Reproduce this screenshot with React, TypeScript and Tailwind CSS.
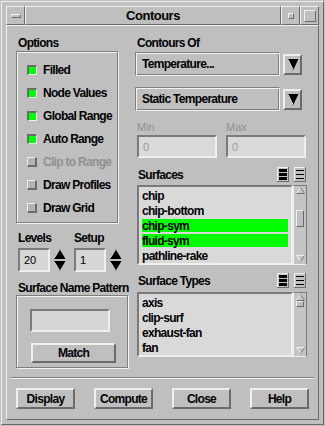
const raised1 = "border border-t-[#efefef] border-l-[#efefef] border-r-[#6b6b6b] border-b-[#6b6b6b]";
const raised2 = "border-2 border-t-[#efefef] border-l-[#efefef] border-r-[#6b6b6b] border-b-[#6b6b6b]";
const sunken2 = "border-2 border-t-[#7a7a7a] border-l-[#7a7a7a] border-r-[#efefef] border-b-[#efefef]";
const etched = "border border-[#7f7f7f] shadow-[inset_1px_1px_0_#f2f2f2,1px_1px_0_#f2f2f2]";
const etchedIn = "border border-t-[#7f7f7f] border-l-[#7f7f7f] border-r-[#f2f2f2] border-b-[#f2f2f2] shadow-[inset_1px_1px_0_#f2f2f2,inset_-1px_-1px_0_#7f7f7f]";

const options = [
  { label: "Filled", on: true },
  { label: "Node Values", on: true },
  { label: "Global Range", on: true },
  { label: "Auto Range", on: true },
  { label: "Clip to Range", on: false, disabled: true },
  { label: "Draw Profiles", on: false },
  { label: "Draw Grid", on: false },
];

const surfaces = [
  { name: "chip" },
  { name: "chip-bottom" },
  { name: "chip-sym", sel: true },
  { name: "fluid-sym", sel: true },
  { name: "pathline-rake" },
];

const surfaceTypes = ["axis", "clip-surf", "exhaust-fan", "fan"];

const DownArrow = () => (
  <svg width="12" height="13" viewBox="0 0 12 13">
    <polygon points="0.5,1 11.5,1 6,12.5" fill="#000" />
    <line x1="1" y1="1.5" x2="6" y2="11.5" stroke="#f0f0f0" strokeWidth="1" />
  </svg>
);

const SpinArrows = () => (
  <svg width="13" height="24" viewBox="0 0 13 24">
    <polygon points="6.5,1 12.5,11 0.5,11" fill="#000" />
    <line x1="6.5" y1="1.5" x2="1" y2="10.5" stroke="#f0f0f0" />
    <polygon points="0.5,13 12.5,13 6.5,23" fill="#000" />
    <line x1="1" y1="13.5" x2="6.5" y2="22.5" stroke="#f0f0f0" />
  </svg>
);

const ListIcons = () => (
  <div className="flex gap-[5px] pr-px">
    <svg width="12" height="15" viewBox="0 0 12 15">
      <rect x="0" y="0" width="12" height="15" fill="#bfbfbf" />
      <path d="M0 0H12M0 0V15" stroke="#f0f0f0" strokeWidth="2" />
      <path d="M12 0V15M0 15H12" stroke="#6b6b6b" strokeWidth="2" />
      <rect x="2" y="2" width="8" height="3" fill="#000" />
      <rect x="2" y="6" width="8" height="3" fill="#000" />
      <rect x="2" y="10" width="8" height="3" fill="#000" />
    </svg>
    <svg width="12" height="15" viewBox="0 0 12 15">
      <rect x="0" y="0" width="12" height="15" fill="#bfbfbf" />
      <path d="M0 0H12M0 0V15" stroke="#f0f0f0" strokeWidth="2" />
      <path d="M12 0V15M0 15H12" stroke="#6b6b6b" strokeWidth="2" />
      <path d="M2 3.5H10M2 7.5H10M2 11.5H10" stroke="#000" strokeWidth="1" />
    </svg>
  </div>
);

const ScrollUp = () => (
  <svg width="9" height="7" viewBox="0 0 9 7">
    <polygon points="4.5,0.5 8.5,6.5 0.5,6.5" fill="#c8c8c8" stroke="#f0f0f0" />
    <line x1="0.5" y1="6.5" x2="8.5" y2="6.5" stroke="#6b6b6b" />
    <line x1="4.5" y1="0.5" x2="8.5" y2="6.5" stroke="#6b6b6b" />
  </svg>
);

const ScrollDown = () => (
  <svg width="9" height="7" viewBox="0 0 9 7">
    <polygon points="0.5,0.5 8.5,0.5 4.5,6.5" fill="#c8c8c8" stroke="#f0f0f0" />
    <line x1="8.5" y1="0.5" x2="4.5" y2="6.5" stroke="#6b6b6b" />
  </svg>
);

const Checkbox = ({ on }: { on: boolean }) =>
  on ? (
    <div className="w-[10px] h-[10px] shrink-0 border-t-2 border-l-2 border-r border-b border-t-[#6b6b6b] border-l-[#6b6b6b] border-r-[#efefef] border-b-[#efefef] bg-[#00ff00]" />
  ) : (
    <div className="w-[10px] h-[10px] shrink-0 border-t border-l border-r-2 border-b-2 border-t-[#efefef] border-l-[#efefef] border-r-[#6b6b6b] border-b-[#6b6b6b] bg-[#b4b4b4]" />
  );

const Scrollbar = ({ sliderTop, sliderH }: { sliderTop: string; sliderH: string }) => (
  <div className="w-[14px] h-full flex flex-col items-center border border-t-[#7a7a7a] border-l-[#efefef] border-r-[#7a7a7a] border-b-[#efefef] bg-[#c4c4c4]">
    <div className="mt-px">
      <ScrollUp />
    </div>
    <div className={`w-[8px] ${sliderTop} ${sliderH} ${raised1} bg-[#bfbfbf]`} />
    <div className="flex-1" />
    <div className="mb-[2px]">
      <ScrollDown />
    </div>
  </div>
);

export default function App() {
  return (
    <div className="w-[325px] h-[426px] bg-[#bfbfbf] p-px font-['Liberation_Sans',Arial,sans-serif] font-bold text-[12px] tracking-[-0.7px] leading-[14px] text-black whitespace-nowrap">
      <div className={`h-full p-1 flex flex-col ${raised1}`}>
        {/* title bar */}
        <div className="flex h-[19px] shrink-0">
          <div className={`w-[19px] flex items-center justify-center ${raised1}`}>
            <div className={`w-[10px] h-[4px] ${raised1}`} />
          </div>
          <div className={`flex-1 flex items-center justify-center text-[13px] tracking-[-0.5px] ${raised1}`}>Contours</div>
          <div className={`w-[19px] flex items-center justify-center ${raised1}`}>
            <div className={`w-[6px] h-[6px] ${raised1}`} />
          </div>
          <div className={`w-[19px] flex items-center justify-center ${raised1}`}>
            <div className={`w-[12px] h-[12px] ${raised1}`} />
          </div>
        </div>

        {/* panel */}
        <div className={`flex-1 flex flex-col ${raised1}`}>
          <div className="flex pl-[9px] pt-[10px]">
            {/* left column */}
            <div className="w-[112px] flex flex-col">
              <div className="pl-[2px] h-[14px]">Options</div>
              <div className={`mt-px w-[102px] h-[172px] pt-[6px] ${etched}`}>
                {options.map((o) => (
                  <div key={o.label} className="h-[23px] flex items-center pl-[10px] gap-[6px]">
                    <Checkbox on={o.on} />
                    <span className={o.disabled ? "text-[#909090]" : ""}>{o.label}</span>
                  </div>
                ))}
              </div>
              <div className="mt-[8px] h-[14px] flex pl-[2px]">
                <span className="w-[56px]">Levels</span>
                <span>Setup</span>
              </div>
              <div className="mt-[3px] flex pl-[2px] gap-[8px]">
                {["20", "1"].map((v) => (
                  <div key={v} className="flex">
                    <div className={`w-[32px] h-[24px] bg-[#d6d6d6] flex items-center pl-[4px] font-normal text-[11px] tracking-normal ${sunken2}`}>{v}</div>
                    <div className="ml-[3px]">
                      <SpinArrows />
                    </div>
                  </div>
                ))}
              </div>
              <div className="mt-[9px] h-[14px] pl-[2px]">Surface Name Pattern</div>
              <div className={`h-[73px] w-[112px] pl-[13px] pt-[13px] ${etched}`}>
                <div className={`w-[80px] h-[23px] bg-[#d6d6d6] ${sunken2}`} />
                <div className={`mt-[11px] ml-px w-[85px] h-[20px] flex items-center justify-center ${raised2}`}>Match</div>
              </div>
            </div>

            {/* right column */}
            <div className="ml-[7px] w-[172px] flex flex-col">
              <div className="pl-[2px] h-[14px]">Contours Of</div>
              {["Temperature...", "Static Temperature"].map((t, i) => (
                <div key={t} className={`flex items-center ${i === 0 ? "mt-[2px]" : "mt-[11px]"}`}>
                  <div className={`w-[145px] h-[24px] flex items-center pl-[6px] ${etchedIn}`}>{t}</div>
                  <div className={`ml-[3px] w-[19px] h-[21px] flex items-center justify-center ${raised2}`}>
                    <DownArrow />
                  </div>
                </div>
              ))}
              <div className="mt-[9px] ml-[2px] flex gap-[9px]">
                {["Min", "Max"].map((l) => (
                  <div key={l} className="w-[80px] flex flex-col">
                    <div className="h-[14px] font-normal text-[11px] tracking-normal text-[#909090]">{l}</div>
                    <div className={`mt-px h-[23px] bg-[#d9d9d9] flex items-center pl-[4px] font-normal text-[11px] tracking-normal text-[#9a9a9a] ${sunken2}`}>0</div>
                  </div>
                ))}
              </div>

              <div className="mt-[8px] h-[17px] flex items-center justify-between">
                <span className="pl-[3px]">Surfaces</span>
                <ListIcons />
              </div>
              <div className="mt-[2px] h-[80px] flex pl-[2px]">
                <div className={`w-[156px] h-full bg-[#d9d9d9] pt-px ${sunken2}`}>
                  {surfaces.map((s) => (
                    <div key={s.name} className="h-[15px] flex items-center">
                      <div className={`mx-[3px] flex-1 h-[13px] flex items-center ${s.sel ? "bg-[#00ff00]" : ""}`}>{s.name}</div>
                    </div>
                  ))}
                </div>
                <Scrollbar sliderTop="mt-[16px]" sliderH="h-[17px]" />
              </div>

              <div className="mt-[7px] h-[17px] flex items-center justify-between">
                <span className="pl-[3px]">Surface Types</span>
                <ListIcons />
              </div>
              <div className="mt-[3px] h-[65px] flex pl-[2px]">
                <div className={`w-[156px] h-full bg-[#d9d9d9] pt-px ${sunken2}`}>
                  {surfaceTypes.map((s) => (
                    <div key={s} className="h-[15px] flex items-center pl-[3px]">
                      {s}
                    </div>
                  ))}
                </div>
                <Scrollbar sliderTop="mt-0" sliderH="h-[6px]" />
              </div>
            </div>
          </div>

          <div className="mt-[9px] mx-[4px] h-[2px] border-t border-t-[#7f7f7f] border-b border-b-[#f2f2f2]" />

          <div className="mt-[9px] flex pl-[9px] gap-[19px]">
            {["Display", "Compute", "Close", "Help"].map((b) => (
              <div key={b} className={`w-[59px] h-[21px] flex items-center justify-center ${raised2}`}>{b}</div>
            ))}
          </div>
        </div>
      </div>
    </div>
  );
}
